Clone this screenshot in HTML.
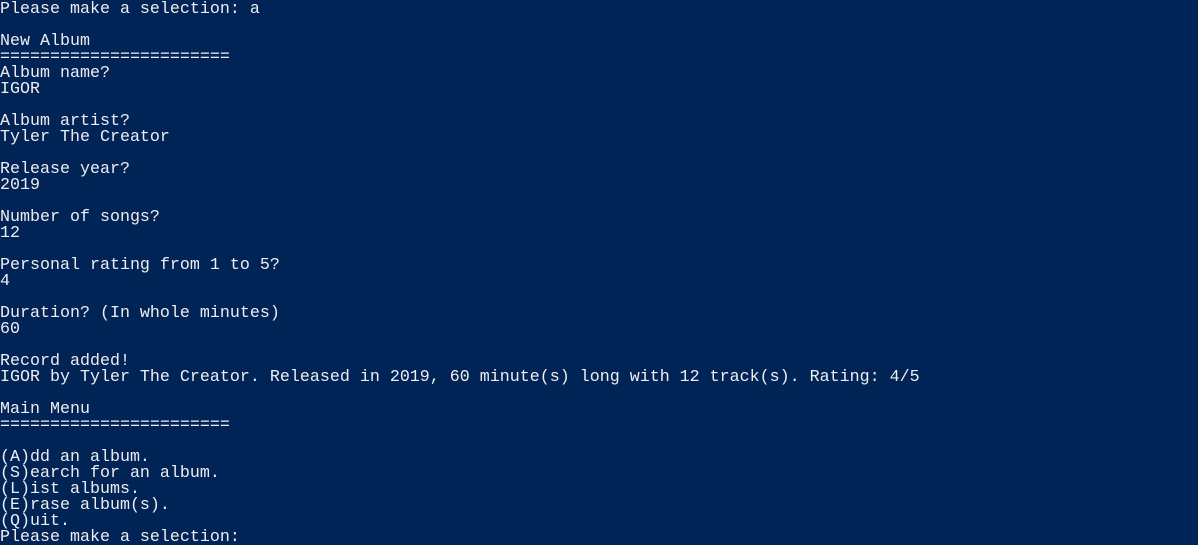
<!DOCTYPE html>
<html><head><meta charset="utf-8"><style>
html,body{margin:0;padding:0;background:#012456;width:1198px;height:545px;overflow:hidden}
pre{margin:0;padding:2px 0 0 0;font-family:"Liberation Mono",monospace;font-size:16.667px;line-height:16px;color:#eeedf0;white-space:pre}
</style></head><body><pre>Please make a selection: a

New Album
=======================
Album name?
IGOR

Album artist?
Tyler The Creator

Release year?
2019

Number of songs?
12

Personal rating from 1 to 5?
4

Duration? (In whole minutes)
60

Record added!
IGOR by Tyler The Creator. Released in 2019, 60 minute(s) long with 12 track(s). Rating: 4/5

Main Menu
=======================

(A)dd an album.
(S)earch for an album.
(L)ist albums.
(E)rase album(s).
(Q)uit.
Please make a selection: </pre></body></html>
